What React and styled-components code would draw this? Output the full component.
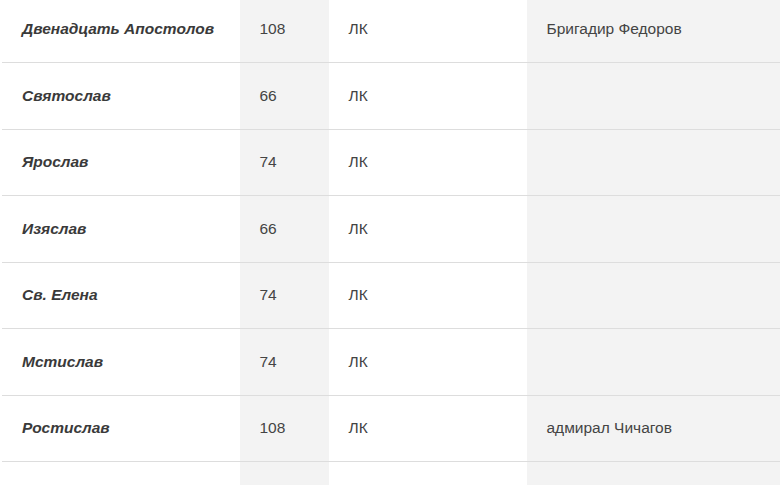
import React from 'react';
import styled, { createGlobalStyle } from 'styled-components';

const GlobalStyle = createGlobalStyle`
  body {
    margin: 0;
    background: #fff;
    font-family: 'Liberation Sans', Arial, sans-serif;
  }
`;

const Frame = styled.div`
  height: 100vh;
  overflow: hidden;
`;

const Table = styled.table`
  width: calc(100% - 2px);
  margin: -3.5px 0 0 2px;
  border-collapse: collapse;
  table-layout: fixed;
  font-size: 15.5px;
  color: #444;
`;

const Col = styled.col`
  width: ${(p) => p.$w || 'auto'};
  background: ${(p) => (p.$shaded ? '#f3f3f3' : 'transparent')};
`;

const Row = styled.tr`
  border-bottom: 1px solid #dddddd;
`;

const Cell = styled.td`
  padding: 21.5px 19.5px;
  line-height: 22.5px;
  text-align: left;
  vertical-align: middle;
  white-space: nowrap;
`;

const NameCell = styled(Cell)`
  padding-left: 20px;
  font-weight: bold;
  font-style: italic;
  color: #3a3a3a;
`;

const ships = [
  { name: 'Двенадцать Апостолов', guns: 108, type: 'ЛК', captain: 'Бригадир Федоров' },
  { name: 'Святослав', guns: 66, type: 'ЛК', captain: '' },
  { name: 'Ярослав', guns: 74, type: 'ЛК', captain: '' },
  { name: 'Изяслав', guns: 66, type: 'ЛК', captain: '' },
  { name: 'Св. Елена', guns: 74, type: 'ЛК', captain: '' },
  { name: 'Мстислав', guns: 74, type: 'ЛК', captain: '' },
  { name: 'Ростислав', guns: 108, type: 'ЛК', captain: 'адмирал Чичагов' },
  { name: '', guns: '', type: '', captain: '' },
];

const App = () => (
  <Frame>
    <GlobalStyle />
    <Table>
      <colgroup>
        <Col $w='238px' />
        <Col $w='89px' $shaded />
        <Col $w='198px' />
        <Col $shaded />
      </colgroup>
      <tbody>
        {ships.map((s, i) => (
          <Row key={i}>
            <NameCell>{s.name || '\u00a0'}</NameCell>
            <Cell>{s.guns}</Cell>
            <Cell>{s.type}</Cell>
            <Cell>{s.captain}</Cell>
          </Row>
        ))}
      </tbody>
    </Table>
  </Frame>
);

export default App;
